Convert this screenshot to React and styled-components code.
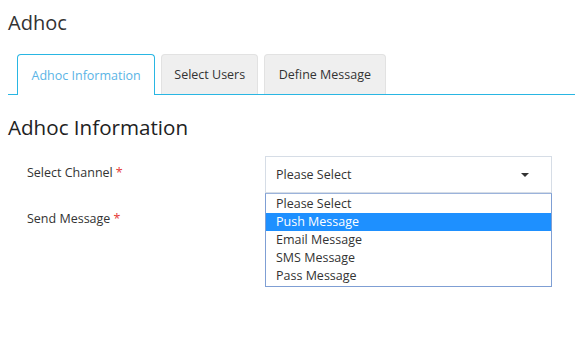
import React from 'react';
import styled, { createGlobalStyle } from 'styled-components';

const GlobalStyle = createGlobalStyle`
  body {
    margin: 0;
    background: #fff;
    font-family: "Open Sans", "Noto Sans", sans-serif;
    color: #333;
  }
`;

const Page = styled.div`
  padding: 10px 0 0 8px;
`;

const PageTitle = styled.h1`
  margin: 0;
  font-size: 20px;
  font-weight: 400;
  line-height: 26px;
  color: #333;
`;

const TabBar = styled.div`
  display: flex;
  gap: 6px;
  margin-top: 18px;
  padding-left: 9px;
  border-bottom: 1px solid #29b6e3;
`;

const Tab = styled.div`
  padding: 0 ${p => p.$pad}px;
  display: flex;
  align-items: center;
  font-size: 12.5px;
  border-radius: 4px 4px 0 0;
  border: 1px solid ${p => (p.$active ? '#29b6e3' : '#e2e2e2')};
  border-bottom: none;
  margin-bottom: ${p => (p.$active ? '-1px' : '0')};
  height: ${p => (p.$active ? '41px' : '40px')};
  background: ${p => (p.$active ? '#fff' : '#efefef')};
  color: ${p => (p.$active ? '#5ab4e6' : '#333')};
  box-sizing: border-box;
`;

const SectionTitle = styled.h2`
  margin: 18px 0 0;
  font-size: 20.6px;
  font-weight: 400;
  line-height: 28px;
  color: #222;
`;

const Form = styled.div`
  display: grid;
  grid-template-columns: 238px 287px;
  margin-top: 15px;
  padding-left: 19px;
`;

const Label = styled.div`
  font-size: 12.5px;
  color: #333;
  padding-top: ${p => p.$top}px;
`;

const Star = styled.span`
  color: #e53935;
  margin-left: 3px;
`;

const SelectBox = styled.div`
  height: 37px;
  box-sizing: border-box;
  border: 1px solid #d6dde6;
  display: flex;
  align-items: center;
  justify-content: space-between;
  padding: 0 22px 0 10px;
  font-size: 12.5px;
  color: #333;
`;

const Caret = styled.span`
  width: 0;
  height: 0;
  border-left: 4px solid transparent;
  border-right: 4px solid transparent;
  border-top: 4px solid #333;
`;

const List = styled.div`
  border: 1px solid #7f9fd4;
  border-top-color: #9bb3db;
  padding: 1px 0 1px;
  box-sizing: border-box;
`;

const Option = styled.div`
  height: 18px;
  line-height: 18px;
  padding: 0 10px;
  font-size: 12.5px;
  background: ${p => (p.$selected ? '#1e90ff' : 'transparent')};
  color: ${p => (p.$selected ? '#fff' : '#333')};
`;

const tabs = [
  { label: 'Adhoc Information', pad: 13.5, active: true },
  { label: 'Select Users', pad: 12 },
  { label: 'Define Message', pad: 13.5 },
];

const options = ['Please Select', 'Push Message', 'Email Message', 'SMS Message', 'Pass Message'];

export default function App() {
  return (
    <Page>
      <GlobalStyle />
      <PageTitle>Adhoc</PageTitle>
      <TabBar>
        {tabs.map(t => (
          <Tab key={t.label} $active={t.active} $pad={t.pad}>{t.label}</Tab>
        ))}
      </TabBar>
      <SectionTitle>Adhoc Information</SectionTitle>
      <Form>
        <div>
          <Label $top={8}>Select Channel<Star>*</Star></Label>
          <Label $top={29}>Send Message<Star>*</Star></Label>
        </div>
        <div>
          <SelectBox>
            Please Select
            <Caret />
          </SelectBox>
          <List>
            {options.map((o, i) => (
              <Option key={o} $selected={i === 1}>{o}</Option>
            ))}
          </List>
        </div>
      </Form>
    </Page>
  );
}
